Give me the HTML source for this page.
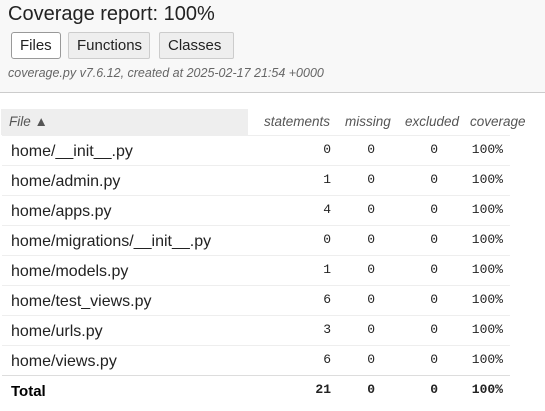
<!DOCTYPE html>
<html><head><meta charset="utf-8"><style>
*{margin:0;padding:0;box-sizing:border-box}
body{width:545px;height:411px;background:#fff;font-family:"Liberation Sans",sans-serif;color:#000;position:relative;overflow:hidden}
.hd{position:absolute;left:0;top:0;width:545px;height:93px;background:#f8f8f8;border-bottom:1px solid #ccc}
h1{position:absolute;left:8px;top:3px;font-size:20px;font-weight:normal;color:#222}
.b{position:absolute;top:32px;height:27px;font-size:15px;line-height:25px;padding:0 8px;border:1px solid #ccc;border-radius:2px;background:#eee;color:#222}
.sub{position:absolute;left:8px;top:66px;font-size:12.5px;font-style:italic;color:#666}
.th{position:absolute;top:109px;height:26px;font-size:13.5px;font-style:italic;color:#555;line-height:26px}
.r{position:absolute;left:2px;width:508px;height:30px;border-top:1px solid #eee}
.f{position:absolute;left:9px;font-size:16px;color:#222}
.n{position:absolute;font-family:"Liberation Mono",monospace;font-size:13px;color:#222;text-align:right;width:60px}
</style></head><body>
<div class="hd">
<h1>Coverage report: 100%</h1>
<div class="b" style="left:11px;background:#fff;border:1px solid #999;border-radius:3px">Files</div>
<div class="b" style="left:68px;width:82px">Functions</div>
<div class="b" style="left:159px;width:75px">Classes</div>
<div class="sub">coverage.py v7.6.12, created at 2025-02-17 21:54 +0000</div>
</div>
<div class="th" style="left:1px;width:247px;background:#eee;padding-left:8px">File ▲</div>
<div class="th" style="left:264px">statements</div>
<div class="th" style="left:345px">missing</div>
<div class="th" style="left:405px">excluded</div>
<div class="th" style="left:470px">coverage</div>
<div class="r" style="top:135px"><span class="f" style="top:7px">home/__init__.py</span><span class="n" style="left:269px;top:6px">0</span><span class="n" style="left:313px;top:6px">0</span><span class="n" style="left:376px;top:6px">0</span><span class="n" style="left:441px;top:6px">100%</span></div>
<div class="r" style="top:165px"><span class="f" style="top:7px">home/admin.py</span><span class="n" style="left:269px;top:6px">1</span><span class="n" style="left:313px;top:6px">0</span><span class="n" style="left:376px;top:6px">0</span><span class="n" style="left:441px;top:6px">100%</span></div>
<div class="r" style="top:195px"><span class="f" style="top:7px">home/apps.py</span><span class="n" style="left:269px;top:6px">4</span><span class="n" style="left:313px;top:6px">0</span><span class="n" style="left:376px;top:6px">0</span><span class="n" style="left:441px;top:6px">100%</span></div>
<div class="r" style="top:225px"><span class="f" style="top:7px">home/migrations/__init__.py</span><span class="n" style="left:269px;top:6px">0</span><span class="n" style="left:313px;top:6px">0</span><span class="n" style="left:376px;top:6px">0</span><span class="n" style="left:441px;top:6px">100%</span></div>
<div class="r" style="top:255px"><span class="f" style="top:7px">home/models.py</span><span class="n" style="left:269px;top:6px">1</span><span class="n" style="left:313px;top:6px">0</span><span class="n" style="left:376px;top:6px">0</span><span class="n" style="left:441px;top:6px">100%</span></div>
<div class="r" style="top:285px"><span class="f" style="top:7px">home/test_views.py</span><span class="n" style="left:269px;top:6px">6</span><span class="n" style="left:313px;top:6px">0</span><span class="n" style="left:376px;top:6px">0</span><span class="n" style="left:441px;top:6px">100%</span></div>
<div class="r" style="top:315px"><span class="f" style="top:7px">home/urls.py</span><span class="n" style="left:269px;top:6px">3</span><span class="n" style="left:313px;top:6px">0</span><span class="n" style="left:376px;top:6px">0</span><span class="n" style="left:441px;top:6px">100%</span></div>
<div class="r" style="top:345px"><span class="f" style="top:7px">home/views.py</span><span class="n" style="left:269px;top:6px">6</span><span class="n" style="left:313px;top:6px">0</span><span class="n" style="left:376px;top:6px">0</span><span class="n" style="left:441px;top:6px">100%</span></div>
<div class="r" style="top:375px;border-top:1px solid #ddd"><span class="f" style="top:7px;font-size:15px;font-weight:bold;color:#000">Total</span><span class="n" style="left:269px;top:6px;font-weight:bold">21</span><span class="n" style="left:313px;top:6px;font-weight:bold">0</span><span class="n" style="left:376px;top:6px;font-weight:bold">0</span><span class="n" style="left:441px;top:6px;font-weight:bold">100%</span></div>
</body></html>
